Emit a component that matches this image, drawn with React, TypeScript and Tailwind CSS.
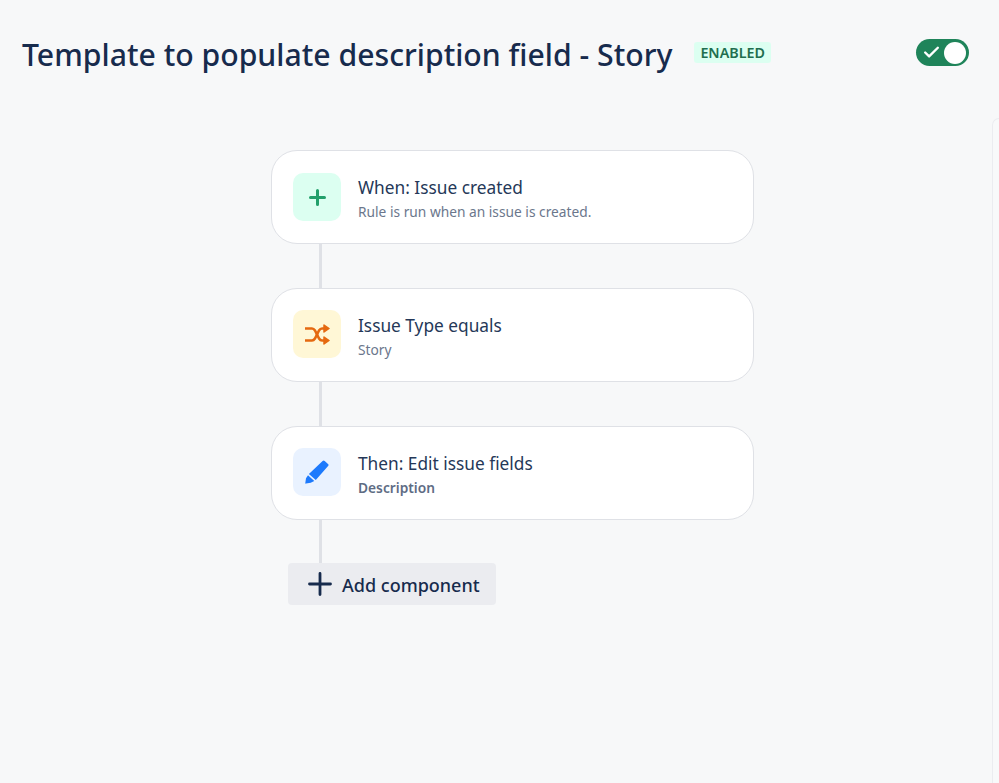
import { Check } from "lucide-react"
import type { ReactNode } from "react"

function RuleCard({
  tile,
  icon,
  title,
  children,
}: {
  tile: string
  icon: ReactNode
  title: string
  children: ReactNode
}) {
  return (
    <div className="flex h-[94px] w-[483px] items-center rounded-[26px] border border-[#dfe1e6] bg-white pl-[21px]">
      <div className={`flex h-12 w-12 items-center justify-center rounded-[10px] ${tile}`}>{icon}</div>
      <div className="mt-[3px] ml-[17px]">
        <div className="text-[17.3px] leading-[24px] text-[#253858]">{title}</div>
        <div className="mt-[2px] text-[13.75px] leading-[20px] text-[#6b778c]">{children}</div>
      </div>
    </div>
  )
}

function Connector({ height }: { height: string }) {
  return <div className={`ml-[48px] w-[3px] bg-[#dfe1e6] ${height}`} />
}

export default function App() {
  return (
    <div className="flex h-[783px] w-[999px] flex-col overflow-hidden bg-[#f7f8f9] font-['Noto_Sans',sans-serif]">
      {/* Header */}
      <header className="flex h-[118px] items-start pl-[22px] pt-[33px]">
        <h1 className="text-[30.2px] leading-[44px] font-medium whitespace-nowrap text-[#172b4d]">
          Template to populate description field - Story
        </h1>
        <span className="mt-[9px] ml-[22px] flex h-[21px] items-center rounded-[3px] bg-[#dcfff1] px-[6px] text-[14.3px] font-semibold text-[#216e4e]">
          ENABLED
        </span>
        <div className="mt-[6px] ml-auto mr-[30px] flex h-[27px] w-[53px] items-center justify-between rounded-full bg-[#1f845a] pl-[6px] pr-[3px]">
          <Check size={19} strokeWidth={3} className="text-white" />
          <span className="h-[22px] w-[22px] rounded-full bg-white" />
        </div>
      </header>

      <div className="flex flex-1">
        {/* Rule chain */}
        <main className="w-[992px] pt-[32px] pl-[271px]">
          <RuleCard
            tile="bg-[#dcfff1]"
            title="When: Issue created"
            icon={
              <svg width="17" height="17" viewBox="0 0 17 17" stroke="#22a06b" strokeWidth="3" strokeLinecap="round">
                <path d="M8.5 1.5v14M1.5 8.5h14" />
              </svg>
            }
          >
            Rule is run when an issue is created.
          </RuleCard>
          <Connector height="h-[44px]" />
          <RuleCard
            tile="-mt-[2px] bg-[#fff7d6]"
            title="Issue Type equals"
            icon={
              <svg width="25" height="21" viewBox="0 0 25 21" fill="none" stroke="#e56910" strokeWidth="2.6" strokeLinejoin="round">
                <path d="M0 4.500h7c1.500 0 2 .5 3 2l4 8c1 1.500 1.500 2 3 2h4" />
                <path d="M0 16.500h7c1.500 0 2-.5 3-2l4-8c1-1.500 1.500-2 3-2h4" />
                <path d="M19 1l5 3.500-5 3.500zM19 13l5 3.500-5 3.500z" fill="#e56910" strokeWidth="1.500" />
              </svg>
            }
          >
            Story
          </RuleCard>
          <Connector height="h-[44px]" />
          <RuleCard
            tile="-mt-[2px] bg-[#e9f2ff]"
            title="Then: Edit issue fields"
            icon={
              <svg width="24" height="24" viewBox="0 0 24 24" fill="#1d7afc">
                <path d="M17.600 1a1.500 1.500 0 0 1 2.100 0l3.300 3a1.500 1.500 0 0 1 .1 2.100L10.800 20 3.900 13.900z" />
                <path d="M3 15.300l6.300 5.700-3.600 1.800L1 23.600a.6.6 0 0 1-.7-.7l.7-4.600z" />
              </svg>
            }
          >
            <span className="font-semibold text-[#5e6c84]">Description</span>
          </RuleCard>
          <Connector height="h-[43px]" />
          <button className="ml-[17px] flex h-[42px] w-[208px] items-center rounded-[4px] bg-[#ebecf0] pl-[20px] text-[18px] font-medium text-[#172b4d]">
            <svg width="24" height="24" viewBox="0 0 24 24" stroke="#172b4d" strokeWidth="2.800" strokeLinecap="round" className="mr-[10px]">
              <path d="M12 1.500v21M1.500 12h21" />
            </svg>
            <span className="mt-[2px]">Add component</span>
          </button>
        </main>

        {/* Side panel edge */}
        <aside className="flex-1 rounded-tl-[8px] border-t border-l border-[#ebecf0] bg-[#f8f9fa]" />
      </div>
    </div>
  )
}
